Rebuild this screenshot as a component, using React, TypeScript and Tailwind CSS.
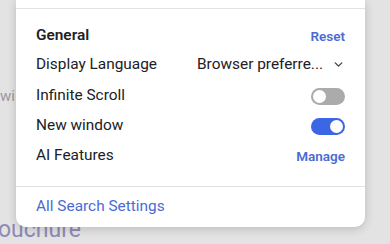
import { ChevronDown } from "lucide-react";

function Toggle({ on }: { on: boolean }) {
  return (
    <div
      className={
        on
          ? "w-[34px] h-[17px] rounded-full bg-[#3b66e6] flex items-center justify-end pr-[2px]"
          : "w-[34px] h-[17px] rounded-full bg-[#ababab] flex items-center justify-start pl-[2px]"
      }
    >
      <div className="w-[13px] h-[13px] rounded-full bg-white" />
    </div>
  );
}

export default function App() {
  return (
    <div
      className="relative w-[390px] h-[244px] overflow-hidden bg-[#e3e3e3]"
      style={{ fontFamily: "Roboto, 'Liberation Sans', sans-serif" }}
    >
      {/* page behind the popup */}
      <div className="pt-[85px] text-[15px] text-[#9a9a9a]">wi</div>
      <div className="pt-[110px] -ml-[2px] text-[23px] leading-none text-[#8f8ab5]">ouchure</div>

      {/* settings popup */}
      <div className="absolute left-[16px] top-0 w-[349px] bg-white rounded-b-[10px] shadow-[0_2px_10px_rgba(0,0,0,0.18)]">
        <div className="h-[8px]" />
        <div className="border-t border-[#e2e2e2] px-[20px] pt-[12px] pb-[15px] text-[15.4px] text-[#202124]">
          <div className="h-[30px] flex items-center justify-between">
            <span className="font-semibold">General</span>
            <span className="text-[13.5px] font-semibold text-[#4a6bd3]">Reset</span>
          </div>
          <div className="h-[30px] flex items-center justify-between -mt-[1px]">
            <span>Display Language</span>
            <span className="flex items-center gap-[9px]">
              <span>Browser preferre...</span>
              <ChevronDown size={13} strokeWidth={2.5} className="text-[#444]" />
            </span>
          </div>
          <div className="h-[30px] flex items-center justify-between mt-[1px]">
            <span>Infinite Scroll</span>
            <Toggle on={false} />
          </div>
          <div className="h-[30px] flex items-center justify-between">
            <span>New window</span>
            <Toggle on={true} />
          </div>
          <div className="h-[30px] flex items-center justify-between">
            <span>AI Features</span>
            <span className="text-[13.5px] font-semibold text-[#4a6bd3]">Manage</span>
          </div>
        </div>
        <div className="border-t border-[#e2e2e2] h-[41px] px-[20px] flex items-center text-[15.4px] text-[#4a6bd3]">
          All Search Settings
        </div>
      </div>
    </div>
  );
}
